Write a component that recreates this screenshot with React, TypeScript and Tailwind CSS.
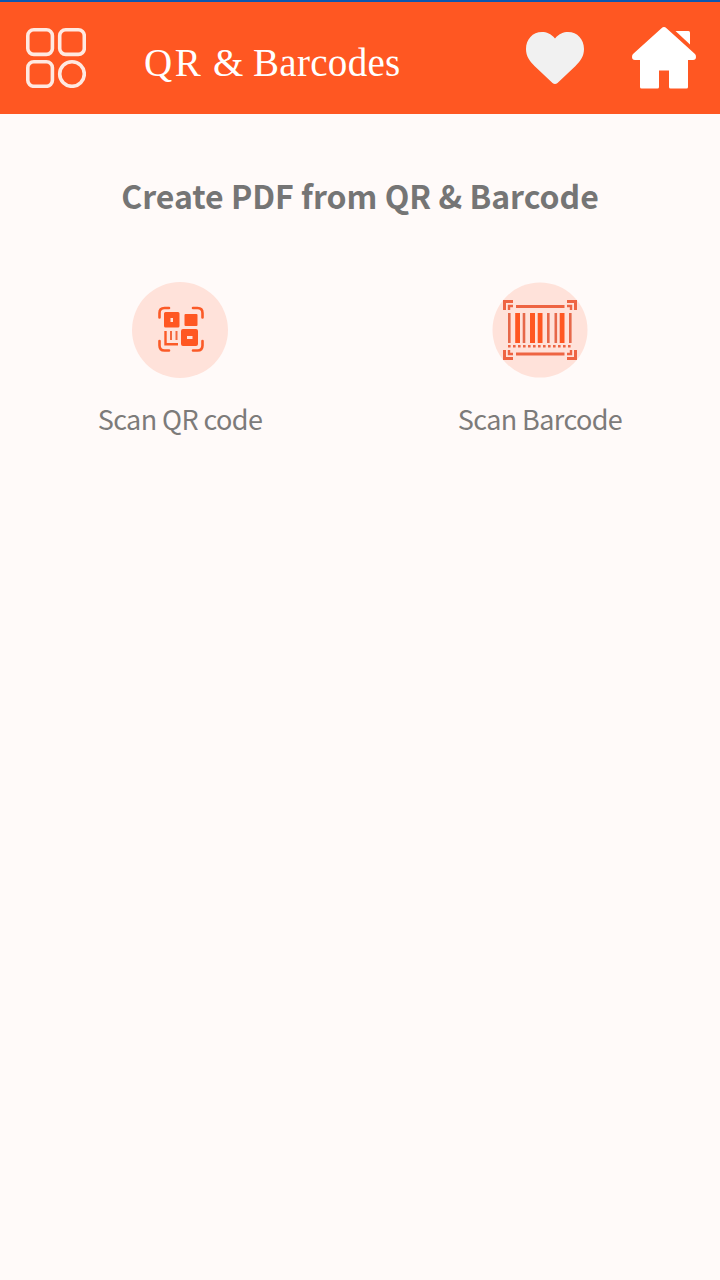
import React from 'react';

function MenuIcon() {
  return (
    <svg viewBox="0 0 60 60" className="h-[60px] w-[60px]" fill="none" stroke="#ffe9e1" strokeWidth="3.6">
      <rect x="1.8" y="1.8" width="24.6" height="24.6" rx="6" />
      <rect x="33.700" y="1.8" width="24.6" height="24.6" rx="6" />
      <rect x="1.8" y="33.700" width="24.6" height="24.6" rx="6" />
      <circle cx="46" cy="46" r="12.3" />
    </svg>
  );
}

function HeartIcon() {
  return (
    <svg viewBox="0 0 58 52" className="h-[52px] w-[58px]" fill="#f1f1f1">
      <path d="M29 6.500C25 1.500 20.500 0 16 0C6.500 0 0 7.500 0 17C0 24 3.500 29 8.500 34L26.500 51Q29 53 31.500 51L49.500 34C54.500 29 58 24 58 17C58 7.500 51.500 0 42 0C37.500 0 33 1.500 29 6.500Z" />
    </svg>
  );
}

function HomeIcon() {
  return (
    <svg viewBox="0 0 64 62" className="h-[62px] w-[64px]" fill="#ffffff">
      <path d="M29.500 1.200Q32 -1 34.500 1.200L63 27Q64 28 64 30Q64 33 61 33H56V60Q56 61.500 54.500 61.500H38.500Q37 61.500 37 60V43.500H27V60Q27 61.500 25.500 61.500H9.500Q8 61.500 8 60V33H3Q0 33 0 30Q0 28 1 27Z" />
      <path d="M43.500 4H56.500Q58 4 58 5.500V17.500Z" />
    </svg>
  );
}

function QrIcon() {
  return (
    <svg viewBox="0 0 96 96" className="h-24 w-24">
      <circle cx="48" cy="48" r="48" fill="#ffe2da" />
      <g fill="none" stroke="#fb5a27" strokeWidth="2.600" strokeLinecap="round">
        <path d="M27.500 35.500V31Q27.500 26 32.500 26H37" />
        <path d="M61 26H65.500Q70.500 26 70.500 31V35.500" />
        <path d="M27.500 59V63.500Q27.500 68.500 32.500 68.500H37" />
        <path d="M61 68.500H65.500Q70.500 68.500 70.500 63.500V59" />
      </g>
      <path
        fill="#ff5722"
        fillRule="evenodd"
        d="M33.500 30H46Q47.500 30 47.500 31.500V44Q47.500 45.500 46 45.500H33.500Q32 45.500 32 44V31.500Q32 30 33.500 30ZM38.500 36V40H41V36Z"
      />
      <rect x="52.500" y="32" width="13" height="12" rx="1" fill="#ff5722" />
      <path
        fill="#ff5722"
        fillRule="evenodd"
        d="M51 47H64Q66 47 66 49V62Q66 64 64 64H51Q49 64 49 62V49Q49 47 51 47ZM55 54V57H60.500V54Z"
      />
      <path d="M33.500 49V62.200H46" fill="none" stroke="#fb5a27" strokeWidth="2.400" />
      <path d="M39 49V58M44.500 49V58" fill="none" stroke="#f4683f" strokeWidth="2" />
    </svg>
  );
}

const bars = [
  { x: 16, w: 2.6, color: '#e6684a' },
  { x: 23.2, w: 4.8, color: '#ff5722' },
  { x: 30.7, w: 2.6, color: '#e6684a' },
  { x: 38, w: 5, color: '#ff5722' },
  { x: 45.700, w: 4.8, color: '#ff5722' },
  { x: 55, w: 2.6, color: '#e6684a' },
  { x: 62.500, w: 2.6, color: '#e6684a' },
  { x: 67.700, w: 4.8, color: '#ff5722' },
  { x: 77, w: 2.6, color: '#e6684a' },
];

function BarcodeIcon() {
  return (
    <svg viewBox="0 0 96 96" className="h-24 w-24">
      <circle cx="48" cy="48" r="47.5" fill="#ffe2da" />
      <g fill="none" stroke="#ee6442" strokeWidth="3">
        <path d="M12.500 28V19.500H21M75 19.500H83.500V28M12.500 68V76.500H21M75 76.500H83.500V68" />
        <path d="M17 28V24H21M75 24H79V28M17 68V72H21M75 72H79V68" strokeWidth="2.400" />
        <path d="M24 24.500H72.500M24 72H72.500" strokeWidth="2.800" />
        <path d="M16 64.300H79" strokeWidth="2.400" strokeDasharray="2.600 2.400" />
      </g>
      {bars.map((bar) => (
        <rect key={bar.x} x={bar.x} y="31" width={bar.w} height="30" fill={bar.color} />
      ))}
    </svg>
  );
}

const actions = [
  { label: 'Scan QR code', icon: <QrIcon /> },
  { label: 'Scan Barcode', icon: <BarcodeIcon /> },
];

export default function App() {
  return (
    <div className="h-[1280px] w-[720px] overflow-hidden bg-[#fffaf9]">
      <div className="h-[2px] bg-[#0b57b0]" />
      <header className="flex h-[112px] items-center bg-[#ff5722] pl-[26px] pr-6">
        <MenuIcon />
        <h1 className="ml-[58px] mt-[9px] whitespace-nowrap font-['Liberation_Serif',serif] text-[39px] leading-[48px] text-white">
          <span className="tracking-[2.500px]">QR</span> &amp; <span className="tracking-[0.300px]">Barcodes</span>
        </h1>
        <div className="ml-auto flex items-center gap-12">
          <HeartIcon />
          <HomeIcon />
        </div>
      </header>
      <main>
        <h2 className="mt-[57px] whitespace-nowrap text-center font-['Noto_Sans_CJK_SC',sans-serif] text-[32px] font-bold leading-[48px] text-[#757575]">
          Create PDF from QR &amp; Barcode
        </h2>
        <div className="mt-[63px] grid grid-cols-2">
          {actions.map((action) => (
            <button key={action.label} className="flex flex-col items-center">
              {action.icon}
              <span className="mt-[21px] whitespace-nowrap font-['Noto_Sans_CJK_SC',sans-serif] text-[27px] leading-[40px] tracking-[-0.600px] text-[#7d7b7a]">
                {action.label}
              </span>
            </button>
          ))}
        </div>
      </main>
    </div>
  );
}
